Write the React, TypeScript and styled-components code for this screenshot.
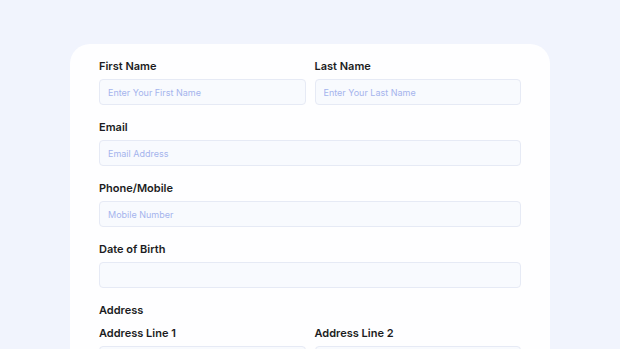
import React from 'react';
import styled, { createGlobalStyle } from 'styled-components';

const GlobalStyle = createGlobalStyle`
  body {
    margin: 0;
    background: #f1f4fd;
    font-family: 'Inter', 'Noto Sans', sans-serif;
  }
`;

const Page = styled.div`
  display: flex;
  justify-content: center;
  align-items: flex-start;
  padding-top: 44px;
  height: 305px;
  overflow: hidden;
`;

const FormCard = styled.form`
  width: 480px;
  box-sizing: border-box;
  background: #fefeff;
  border-radius: 20px;
  padding: 15px 29px 60px;
  display: flex;
  flex-direction: column;
  gap: 15px;
`;

const Row = styled.div`
  display: grid;
  grid-template-columns: 1fr 1fr;
  gap: 9px;
`;

const Field = styled.div`
  display: flex;
  flex-direction: column;
  gap: 6px;
`;

const Section = styled.div`
  display: flex;
  flex-direction: column;
  gap: 9px;
`;

const Label = styled.label`
  font-size: 11px;
  line-height: 14px;
  font-weight: 600;
  color: #1b1c22;
`;

const Input = styled.input`
  box-sizing: border-box;
  height: 26px;
  width: 100%;
  border: 1px solid #e6eaf5;
  border-radius: 4px;
  background: #f8fafe;
  padding: 0 8px;
  font-family: inherit;
  font-size: 9px;
  color: #1b1c22;
  outline: none;

  &::placeholder {
    color: #a5b4ed;
  }
`;

const App: React.FC = () => {
    return (
        <>
            <GlobalStyle />
            <Page>
                <FormCard>
                    <Row>
                        <Field>
                            <Label>First Name</Label>
                            <Input placeholder="Enter Your First Name" />
                        </Field>
                        <Field>
                            <Label>Last Name</Label>
                            <Input placeholder="Enter Your Last Name" />
                        </Field>
                    </Row>
                    <Field>
                        <Label>Email</Label>
                        <Input placeholder="Email Address" />
                    </Field>
                    <Field>
                        <Label>Phone/Mobile</Label>
                        <Input placeholder="Mobile Number" />
                    </Field>
                    <Field>
                        <Label>Date of Birth</Label>
                        <Input />
                    </Field>
                    <Section>
                        <Label as="div">Address</Label>
                        <Row>
                            <Field>
                                <Label>Address Line 1</Label>
                                <Input />
                            </Field>
                            <Field>
                                <Label>Address Line 2</Label>
                                <Input />
                            </Field>
                        </Row>
                    </Section>
                </FormCard>
            </Page>
        </>
    );
};

export default App;
